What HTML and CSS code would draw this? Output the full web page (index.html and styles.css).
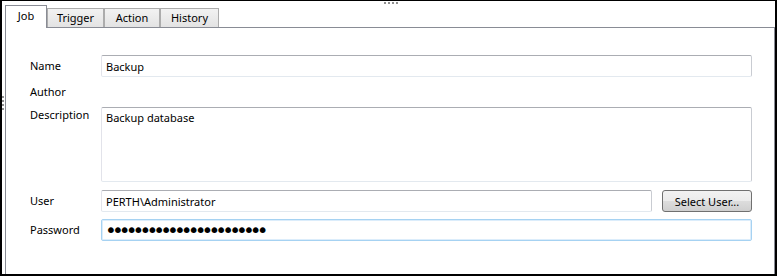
FILE: index.html
```html
<!DOCTYPE html>
<html lang="en">

<head>
  <meta charset="UTF-8">
  <meta name="viewport" content="width=device-width, initial-scale=1.0">
  <title>Job properties</title>
  <link rel="stylesheet" href="styles.css">
</head>

<body>
  <div class="window">
    <!-- ручки для изменения размера -->
    <span class="grip grip_top"></span>
    <span class="grip grip_left"></span>

    <div class="tabs">
      <div class="tab tab_active">Job</div>
      <div class="tab tab_trigger">Trigger</div>
      <div class="tab tab_action">Action</div>
      <div class="tab tab_history">History</div>
    </div>

    <div class="panel">
      <form action="#" class="job">
        <div class="job__row">
          <label class="job__label" for="name">Name</label>
          <input id="name" class="job__input" type="text" value="Backup">
        </div>
        <div class="job__row">
          <span class="job__label">Author</span>
        </div>
        <div class="job__row job__row_top">
          <label class="job__label" for="descr">Description</label>
          <textarea id="descr" class="job__input job__textarea">Backup database</textarea>
        </div>
        <div class="job__row job__row_user">
          <label class="job__label" for="user">User</label>
          <input id="user" class="job__input" type="text" value="PERTH\Administrator">
          <button type="button" class="btn">Select User...</button>
        </div>
        <div class="job__row">
          <label class="job__label" for="pass">Password</label>
          <input id="pass" class="job__input job__input_focus" type="password" value="xxxxxxxxxxxxxxxxxxxxxxx">
        </div>
      </form>
    </div>
  </div>
</body>

</html>
```

FILE: styles.css
```css
* {
  box-sizing: border-box
}

body {
  margin: 0;
  font-family: "Noto Sans", sans-serif;
  font-size: 11px;
  color: #000;
  background: #fff
}

.window {
  position: relative;
  display: flex;
  flex-direction: column;
  width: 777px;
  height: 276px;
  border: 2px solid #000;
  border-top-width: 1px;
  background: #fff
}

.grip {
  position: absolute;
  background: repeating-linear-gradient(90deg, #8f8f8f 0 2px, transparent 2px 4px)
}

.grip_top {
  top: 1px;
  left: 382px;
  width: 14px;
  height: 2px
}

.grip_left {
  top: 95px;
  left: 0;
  width: 2px;
  height: 14px;
  background: repeating-linear-gradient(180deg, #8f8f8f 0 2px, transparent 2px 4px)
}

.tabs {
  display: flex;
  align-items: flex-end;
  height: 22px;
  margin-top: 4px;
  padding-left: 3px
}

.tab {
  height: 19px;
  border: 1px solid #acacac;
  border-bottom: none;
  background: linear-gradient(#f2f2f2, #e3e3e3);
  text-align: center;
  line-height: 18px
}

.tab_active {
  position: relative;
  z-index: 1;
  width: 42px;
  height: 23px;
  margin-bottom: -1px;
  border-color: #898c95;
  background: #fff;
  line-height: 20px
}

.tab_trigger {
  width: 57px
}

.tab_action {
  width: 56px
}

.tab_history {
  width: 59px
}

.panel {
  flex: 1;
  margin-left: 3px;
  border: 1px solid #898c95;
  border-bottom: none;
  padding: 27px 22px 0 24px
}

.job__row {
  display: flex;
  align-items: center;
  min-height: 22px;
  margin-bottom: 4px
}

.job__row_top {
  align-items: flex-start;
  margin-bottom: 8px
}

.job__row_user {
  margin-bottom: 7px
}

.job__label {
  flex: none;
  width: 71px;
  line-height: 16px
}

.job__input {
  flex: 1;
  min-width: 0;
  height: 22px;
  margin: 0;
  padding: 0 4px;
  border: 1px solid;
  border-color: #abadb3 #c9ccd2 #e3e9ef #e2e3ea;
  border-radius: 2px;
  font: inherit;
  color: #000;
  background: #fff;
  outline: 0
}

.job__textarea {
  height: 75px;
  padding: 2px 4px;
  resize: none;
  line-height: 16px
}

.job__input_focus {
  border-color: #a6d2f2;
  box-shadow: inset 0 0 0 1px #dcedfb;
  font-family: "DejaVu Sans", sans-serif;
  font-size: 20px;
  letter-spacing: -4.9px;
  padding-left: 3px
}

.btn {
  flex: none;
  width: 90px;
  height: 22px;
  margin-left: 10px;
  padding: 0;
  border: 1px solid #707070;
  border-radius: 3px;
  background: linear-gradient(#f2f2f2 0%, #ebebeb 50%, #dddddd 50%, #cfcfcf 100%);
  font: inherit;
  color: #000;
  cursor: pointer
}
```
